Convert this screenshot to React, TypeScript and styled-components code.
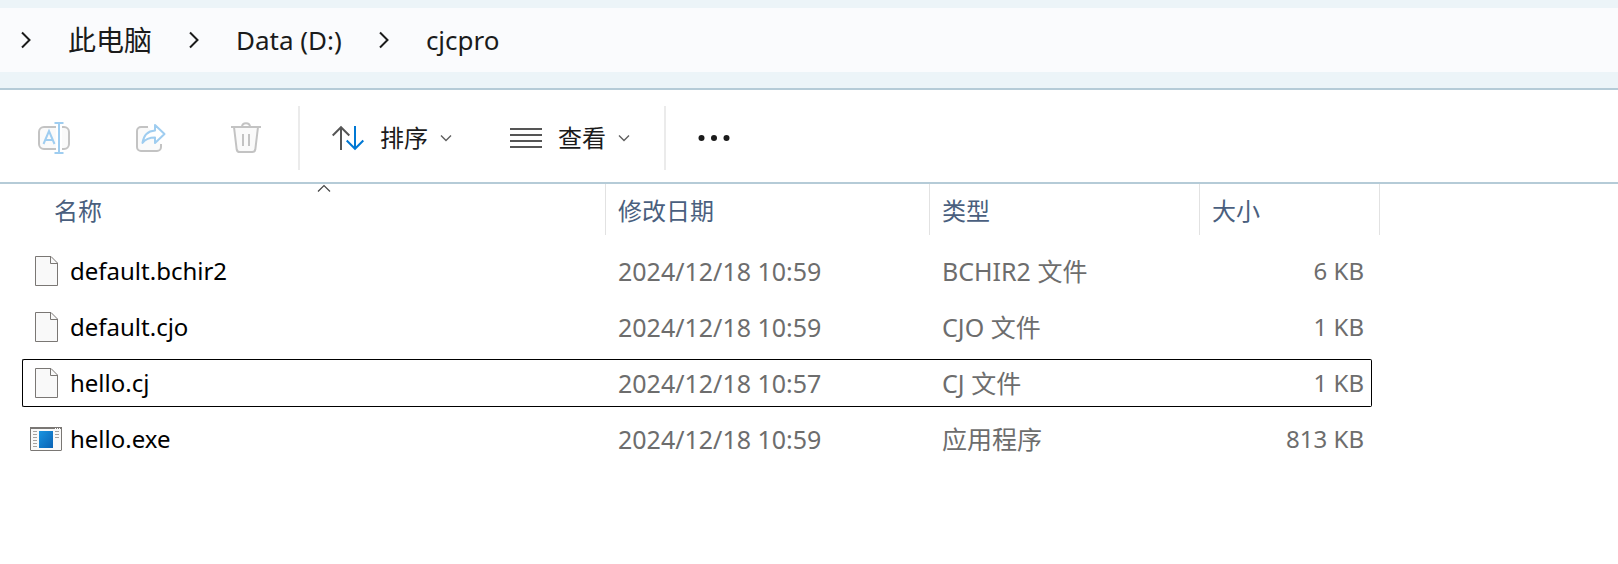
import React from "react";
import styled, { createGlobalStyle } from "styled-components";

const GlobalStyle = createGlobalStyle`
  body {
    margin: 0;
    background: #fff;
    color: #1b1b1b;
    font-family: "Noto Sans", "Noto Sans CJK SC", sans-serif;
    font-size: 24px;
  }
  button {
    font: inherit;
    color: inherit;
    background: none;
    border: 0;
    padding: 0;
  }
  svg {
    display: block;
    flex: none;
  }
`;

const AddressArea = styled.header`
  padding: 8px 0 16px;
  background: #ecf4f8;
  border-bottom: 2px solid #b5cbd7;
`;

const Breadcrumb = styled.nav`
  display: flex;
  align-items: center;
  gap: 37px;
  height: 64px;
  padding-left: 21px;
  background: #fafbfd;
`;

const Crumb = styled.a<{ $size: number }>`
  color: #1b1b1b;
  text-decoration: none;
  white-space: nowrap;
  font-size: ${(p) => p.$size}px;
  line-height: 40px;
`;

const Toolbar = styled.div`
  display: flex;
  align-items: center;
  height: 64px;
  padding: 16px 22px 12px;
  border-bottom: 2px solid #b5cbd7;
`;

const IconGroup = styled.div`
  display: flex;
  gap: 32px;
  margin-right: 20px;
`;

const IconButton = styled.button`
  padding: 16px;
`;

const Divider = styled.span`
  width: 2px;
  height: 64px;
  background: #ebebeb;
`;

const MenuGroup = styled.div`
  display: flex;
  gap: 58px;
  padding: 0 34px 0 32px;
`;

const MenuButton = styled.button`
  display: flex;
  align-items: center;
  line-height: 36px;
`;

const MenuLabel = styled.span`
  margin: 0 12px 0 16px;
`;

const FileTable = styled.table`
  table-layout: fixed;
  width: 1358px;
  margin-left: 22px;
  border-spacing: 0;
`;

const Col = styled.col<{ $width: number }>`
  width: ${(p) => p.$width}px;
`;

const HeadCell = styled.th<{ $indent?: number }>`
  padding: 0 0 8px ${(p) => p.$indent ?? 0}px;
  color: #4a5f7e;
  font-weight: 400;
  text-align: left;
`;

const HeadInner = styled.div`
  position: relative;
  box-sizing: border-box;
  height: 51px;
  padding: 9px 12px 6px;
  border-right: 1px solid #e2e2e2;
  line-height: 36px;
`;

const SortMark = styled.svg`
  position: absolute;
  top: 0;
  left: 50%;
  transform: translateX(-50%);
`;

const Cell = styled.td`
  padding: 4px 0;
`;

type Edge = "start" | "middle" | "end";

const CellInner = styled.div<{ $edge?: Edge; $focused?: boolean; $size?: number }>`
  display: flex;
  align-items: center;
  justify-content: ${(p) => (p.$edge === "end" ? "flex-end" : "flex-start")};
  gap: 8px;
  box-sizing: border-box;
  height: 48px;
  padding: 0 ${(p) => (p.$edge === "end" ? 7 : 12)}px 0 ${(p) => (p.$edge === "start" ? 7 : 12)}px;
  border: 1px solid ${(p) => (p.$focused ? "#000" : "transparent")};
  border-width: 1px ${(p) => (p.$edge === "end" ? 1 : 0)}px 1px ${(p) => (p.$edge === "start" ? 1 : 0)}px;
  border-radius: ${(p) => (p.$edge === "start" ? "2px 0 0 2px" : p.$edge === "end" ? "0 2px 2px 0" : "0")};
  color: ${(p) => (p.$edge === "start" ? "#000" : "#6d6d6d")};
  font-size: ${(p) => p.$size ?? 24}px;
  line-height: 36px;
  white-space: nowrap;
`;

const IconSlot = styled.span`
  display: flex;
  justify-content: center;
  width: 32px;
`;

const CrumbChevron = () => (
  <svg width="10" height="18" viewBox="0 0 10 18" fill="none" stroke="#1b1b1b" strokeWidth="2" aria-hidden="true">
    <path d="M1 1.5 8.5 9 1 16.5" />
  </svg>
);

const MenuChevron = () => (
  <svg width="12" height="8" viewBox="0 0 12 8" fill="none" stroke="#5f5f5f" strokeWidth="1.4" aria-hidden="true">
    <path d="M1 1.5 6 6.5 11 1.5" />
  </svg>
);

const RenameIcon = () => (
  <svg width="32" height="32" viewBox="0 0 32 32" fill="none" strokeWidth="2" aria-hidden="true">
    <path d="M18 5H6a5 5 0 0 0-5 5v12a5 5 0 0 0 5 5h12M24 5h2a5 5 0 0 1 5 5v12a5 5 0 0 1-5 5h-2" fill="#fafafa" stroke="#c3c3c3" />
    <path d="M5.5 22 11 9l5.5 13M7.5 18h7M16.5 1h9M16.5 31h9M21 1v30" stroke="#9fcdf0" />
  </svg>
);

const ShareIcon = () => (
  <svg width="32" height="32" viewBox="0 0 32 32" fill="none" strokeWidth="2" strokeLinejoin="round" aria-hidden="true">
    <path d="M14 5H7a4 4 0 0 0-4 4v16a4 4 0 0 0 4 4h16a4 4 0 0 0 4-4v-3" fill="#fafafa" stroke="#c3c3c3" />
    <path d="M21 3 30.5 12 21 21v-5.5c-6 0-9.5 1.5-12.5 5.5C9.5 14 13.5 9 21 8.5z" fill="#fff" stroke="#9fcdf0" />
  </svg>
);

const TrashIcon = () => (
  <svg width="32" height="32" viewBox="0 0 32 32" fill="none" stroke="#c3c3c3" strokeWidth="2" aria-hidden="true">
    <path d="M4 5l2.700 22.5a3 3 0 0 0 3 2.5h12.600a3 3 0 0 0 3-2.5L28 5" fill="#fafafa" />
    <path d="M1 5h30M12 5c0-5 8-5 8 0M13 12v12M19 12v12" />
  </svg>
);

const SortIcon = () => (
  <svg width="32" height="32" viewBox="0 0 32 32" fill="none" strokeWidth="2" aria-hidden="true">
    <path d="M9 28V5M.7 13.5 9 5.2l8.300 8.300" stroke="#555" />
    <path d="M23 4v23M14.700 18.5 23 26.800l8.300-8.300" stroke="#0078d4" />
  </svg>
);

const LinesIcon = () => (
  <svg width="32" height="32" viewBox="0 0 32 32" stroke="#555" strokeWidth="2" aria-hidden="true">
    <path d="M0 7h32M0 13h32M0 19h32M0 25h32" />
  </svg>
);

const MoreIcon = () => (
  <svg width="32" height="32" viewBox="0 0 32 32" fill="#1b1b1b" aria-hidden="true">
    <circle cx="3.5" cy="16" r="3" />
    <circle cx="16" cy="16" r="3" />
    <circle cx="28.5" cy="16" r="3" />
  </svg>
);

const DocumentIcon = () => (
  <svg width="24" height="30" viewBox="0 0 24 30" aria-hidden="true">
    <path d="M1.5 .5H17l6.5 6.5v22.5h-22z" fill="#f9f9f9" stroke="#7a7774" />
    <path d="M16.5 .5v7h7" fill="none" stroke="#7a7774" />
  </svg>
);

const ProgramIcon = () => (
  <svg width="32" height="24" viewBox="0 0 32 24" aria-hidden="true">
    <defs>
      <linearGradient id="pane" x1="0" y1="0" x2="1" y2="1">
        <stop offset="0" stopColor="#1a94e0" />
        <stop offset="1" stopColor="#0a62b4" />
      </linearGradient>
    </defs>
    <rect x=".5" y=".5" width="31" height="23" rx=".5" fill="#f9f9f9" stroke="#7a7774" />
    <path d="M0 1h32" stroke="#7a7774" strokeWidth="2" />
    <path d="M25 1.5h1M27 1.5h1M29 1.5h1" stroke="#fff" />
    <path d="M3 4.5h4M3 7.5h4M3 10.5h4M3 13.5h4M3 16.5h4M3 19.5h4M25 4.5h4M25 7.5h4M25 10.5h4" stroke="#a5a3a1" />
    <rect x="9" y="4" width="14" height="17" fill="url(#pane)" />
  </svg>
);

const files = [
  { name: "default.bchir2", date: "2024/12/18 10:59", type: "BCHIR2 文件", size: "6 KB" },
  { name: "default.cjo", date: "2024/12/18 10:59", type: "CJO 文件", size: "1 KB" },
  { name: "hello.cj", date: "2024/12/18 10:57", type: "CJ 文件", size: "1 KB", focused: true },
  { name: "hello.exe", date: "2024/12/18 10:59", type: "应用程序", size: "813 KB", program: true },
];

export default function App() {
  return (
    <>
      <GlobalStyle />
      <AddressArea>
        <Breadcrumb aria-label="路径">
          <CrumbChevron />
          <Crumb href="#pc" $size={28}>此电脑</Crumb>
          <CrumbChevron />
          <Crumb href="#data" $size={26}>Data (D:)</Crumb>
          <CrumbChevron />
          <Crumb href="#cjcpro" $size={26}>cjcpro</Crumb>
        </Breadcrumb>
      </AddressArea>
      <Toolbar role="toolbar">
        <IconGroup>
          <IconButton aria-label="重命名" disabled><RenameIcon /></IconButton>
          <IconButton aria-label="共享" disabled><ShareIcon /></IconButton>
          <IconButton aria-label="删除" disabled><TrashIcon /></IconButton>
        </IconGroup>
        <Divider />
        <MenuGroup>
          <MenuButton>
            <SortIcon />
            <MenuLabel>排序</MenuLabel>
            <MenuChevron />
          </MenuButton>
          <MenuButton>
            <LinesIcon />
            <MenuLabel>查看</MenuLabel>
            <MenuChevron />
          </MenuButton>
        </MenuGroup>
        <Divider />
        <MenuGroup>
          <MenuButton aria-label="查看更多"><MoreIcon /></MenuButton>
        </MenuGroup>
      </Toolbar>
      <main>
        <FileTable>
          <colgroup>
            <Col $width={584} />
            <Col $width={324} />
            <Col $width={270} />
            <Col $width={172} />
            <Col $width={8} />
          </colgroup>
          <thead>
            <tr>
              <HeadCell scope="col" $indent={20} aria-sort="ascending">
                <HeadInner>
                  <SortMark width="14" height="8" viewBox="0 0 14 8" fill="none" stroke="#444" strokeWidth="1.2" aria-hidden="true">
                    <path d="M1 7.5 7 1.5l6 6" />
                  </SortMark>
                  名称
                </HeadInner>
              </HeadCell>
              <HeadCell scope="col"><HeadInner>修改日期</HeadInner></HeadCell>
              <HeadCell scope="col"><HeadInner>类型</HeadInner></HeadCell>
              <HeadCell scope="col" colSpan={2}><HeadInner>大小</HeadInner></HeadCell>
            </tr>
          </thead>
          <tbody>
            {files.map((file) => (
              <tr key={file.name}>
                <Cell>
                  <CellInner $edge="start" $focused={file.focused}>
                    <IconSlot>{file.program ? <ProgramIcon /> : <DocumentIcon />}</IconSlot>
                    {file.name}
                  </CellInner>
                </Cell>
                <Cell><CellInner $focused={file.focused} $size={25}>{file.date}</CellInner></Cell>
                <Cell><CellInner $focused={file.focused} $size={25}>{file.type}</CellInner></Cell>
                <Cell><CellInner $edge="end" $focused={file.focused}>{file.size}</CellInner></Cell>
              </tr>
            ))}
          </tbody>
        </FileTable>
      </main>
    </>
  );
}
